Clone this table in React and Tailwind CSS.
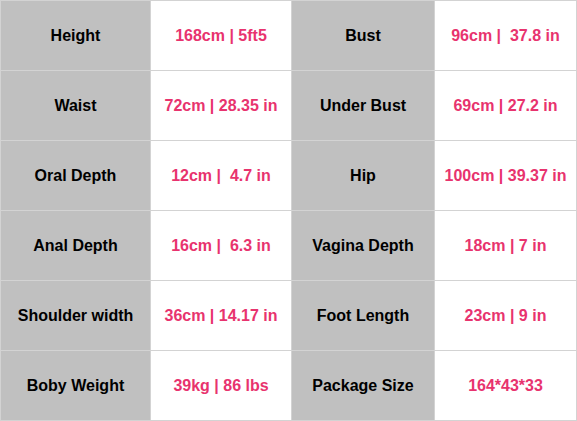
const rows = [
  ["Height", "168cm | 5ft5", "Bust", "96cm |  37.8 in"],
  ["Waist", "72cm | 28.35 in", "Under Bust", "69cm | 27.2 in"],
  ["Oral Depth", "12cm |  4.7 in", "Hip", "100cm | 39.37 in"],
  ["Anal Depth", "16cm |  6.3 in", "Vagina Depth", "18cm | 7 in"],
  ["Shoulder width", "36cm | 14.17 in", "Foot Length", "23cm | 9 in"],
  ["Boby Weight", "39kg | 86 lbs", "Package Size", "164*43*33"],
];

const App = () => {
  return (
    <div className="w-[577px] h-[421px] bg-white font-['Liberation_Sans',Arial,sans-serif]">
      <div className="grid grid-cols-[149px_140px_142px_141px] auto-rows-[69px] gap-px p-px bg-[#d3d3d3]">
        {rows.map((r, i) => (
          <>
            <div key={i + "a"} className="bg-[#c0c0c0] flex items-center justify-center text-base font-bold text-black whitespace-pre">
              {r[0]}
            </div>
            <div key={i + "b"} className="bg-white flex items-center justify-center text-base font-bold text-[#e8336e] whitespace-pre">
              {r[1]}
            </div>
            <div key={i + "c"} className="bg-[#c0c0c0] flex items-center justify-center text-base font-bold text-black whitespace-pre">
              {r[2]}
            </div>
            <div key={i + "d"} className="bg-white flex items-center justify-center text-base font-bold text-[#e8336e] whitespace-pre">
              {r[3]}
            </div>
          </>
        ))}
      </div>
    </div>
  );
};

export default App;
